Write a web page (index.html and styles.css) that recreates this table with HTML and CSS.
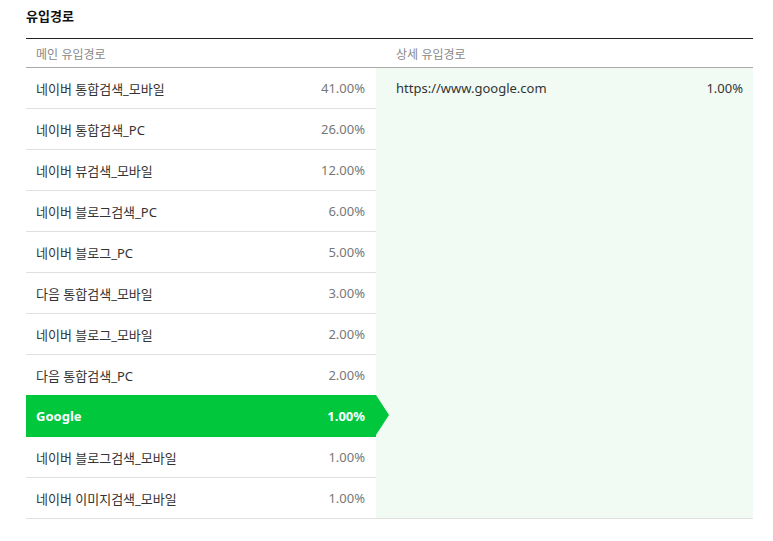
FILE: index.html
```html
<!DOCTYPE html>
<html lang="ko">
<head>
<meta charset="utf-8">
<title>유입경로</title>
<link rel="stylesheet" href="styles.css">
</head>
<body>
<section class="panel">
  <h2 class="title">유입경로</h2>
  <div class="table">
    <div class="head">
      <div class="head-main">메인 유입경로</div>
      <div class="head-sub">상세 유입경로</div>
    </div>
    <div class="body">
      <ul class="main-list">
        <li class="row"><span class="name">네이버 통합검색_모바일</span><span class="pct">41.00%</span></li>
        <li class="row"><span class="name">네이버 통합검색_PC</span><span class="pct">26.00%</span></li>
        <li class="row"><span class="name">네이버 뷰검색_모바일</span><span class="pct">12.00%</span></li>
        <li class="row"><span class="name">네이버 블로그검색_PC</span><span class="pct">6.00%</span></li>
        <li class="row"><span class="name">네이버 블로그_PC</span><span class="pct">5.00%</span></li>
        <li class="row"><span class="name">다음 통합검색_모바일</span><span class="pct">3.00%</span></li>
        <li class="row"><span class="name">네이버 블로그_모바일</span><span class="pct">2.00%</span></li>
        <li class="row"><span class="name">다음 통합검색_PC</span><span class="pct">2.00%</span></li>
        <li class="row active"><span class="name">Google</span><span class="pct">1.00%</span></li>
        <li class="row"><span class="name">네이버 블로그검색_모바일</span><span class="pct">1.00%</span></li>
        <li class="row"><span class="name">네이버 이미지검색_모바일</span><span class="pct">1.00%</span></li>
      </ul>
      <ul class="sub-list">
        <li class="sub-row"><span class="name">https://www.google.com</span><span class="pct">1.00%</span></li>
      </ul>
    </div>
  </div>
</section>
</body>
</html>
```
FILE: styles.css
```css
html, body {
  margin: 0;
  padding: 0;
  background: #fff;
}
body {
  font-family: "Noto Sans", "Noto Sans CJK KR", sans-serif;
  font-size: 13px;
  color: #333;
}
.panel {
  padding: 7px 20px 0 26px;
}
.title {
  margin: 0;
  font-size: 13px;
  font-weight: bold;
  line-height: 18px;
  color: #111;
  font-family: "Noto Sans CJK KR", sans-serif;
}
.table {
  margin-top: 13px;
  border-top: 1px solid #222;
}
.head {
  display: flex;
  height: 28px;
  border-bottom: 1px solid #aaa;
  align-items: center;
  font-size: 12px;
  color: #888;
  font-family: "Noto Sans CJK KR", sans-serif;
}
.head-main {
  width: 350px;
  padding-left: 10px;
  box-sizing: border-box;
}
.head-sub {
  flex: 1;
  padding-left: 20px;
}
.body {
  display: flex;
}
ul {
  list-style: none;
  margin: 0;
  padding: 0;
}
.main-list {
  width: 350px;
  flex: none;
}
.row {
  position: relative;
  display: flex;
  justify-content: space-between;
  align-items: center;
  height: 40px;
  padding: 0 11px 0 10px;
  border-bottom: 1px solid #e0e0e0;
}
.name {
  color: #333;
}
.pct {
  color: #777;
}
.row.active {
  background: #00c73c;
  border-bottom-color: #00c73c;
  margin-top: -1px;
  height: 41px;
}
.row.active::after {
  content: "";
  position: absolute;
  left: 100%;
  top: 0;
  width: 0;
  height: 0;
  border-top: 20.5px solid transparent;
  border-bottom: 20.5px solid transparent;
  border-left: 13px solid #00c73c;
}
.row.active .name,
.row.active .pct {
  color: #fff;
  font-weight: bold;
}
.sub-list {
  flex: 1;
  background: #f1fbf3;
  border-bottom: 1px solid #e0e0e0;
}
.sub-row {
  display: flex;
  justify-content: space-between;
  align-items: center;
  height: 40px;
  padding: 0 10px 0 20px;
}
.sub-row .name {
  color: #333;
}
.sub-row .pct {
  color: #333;
}
```
